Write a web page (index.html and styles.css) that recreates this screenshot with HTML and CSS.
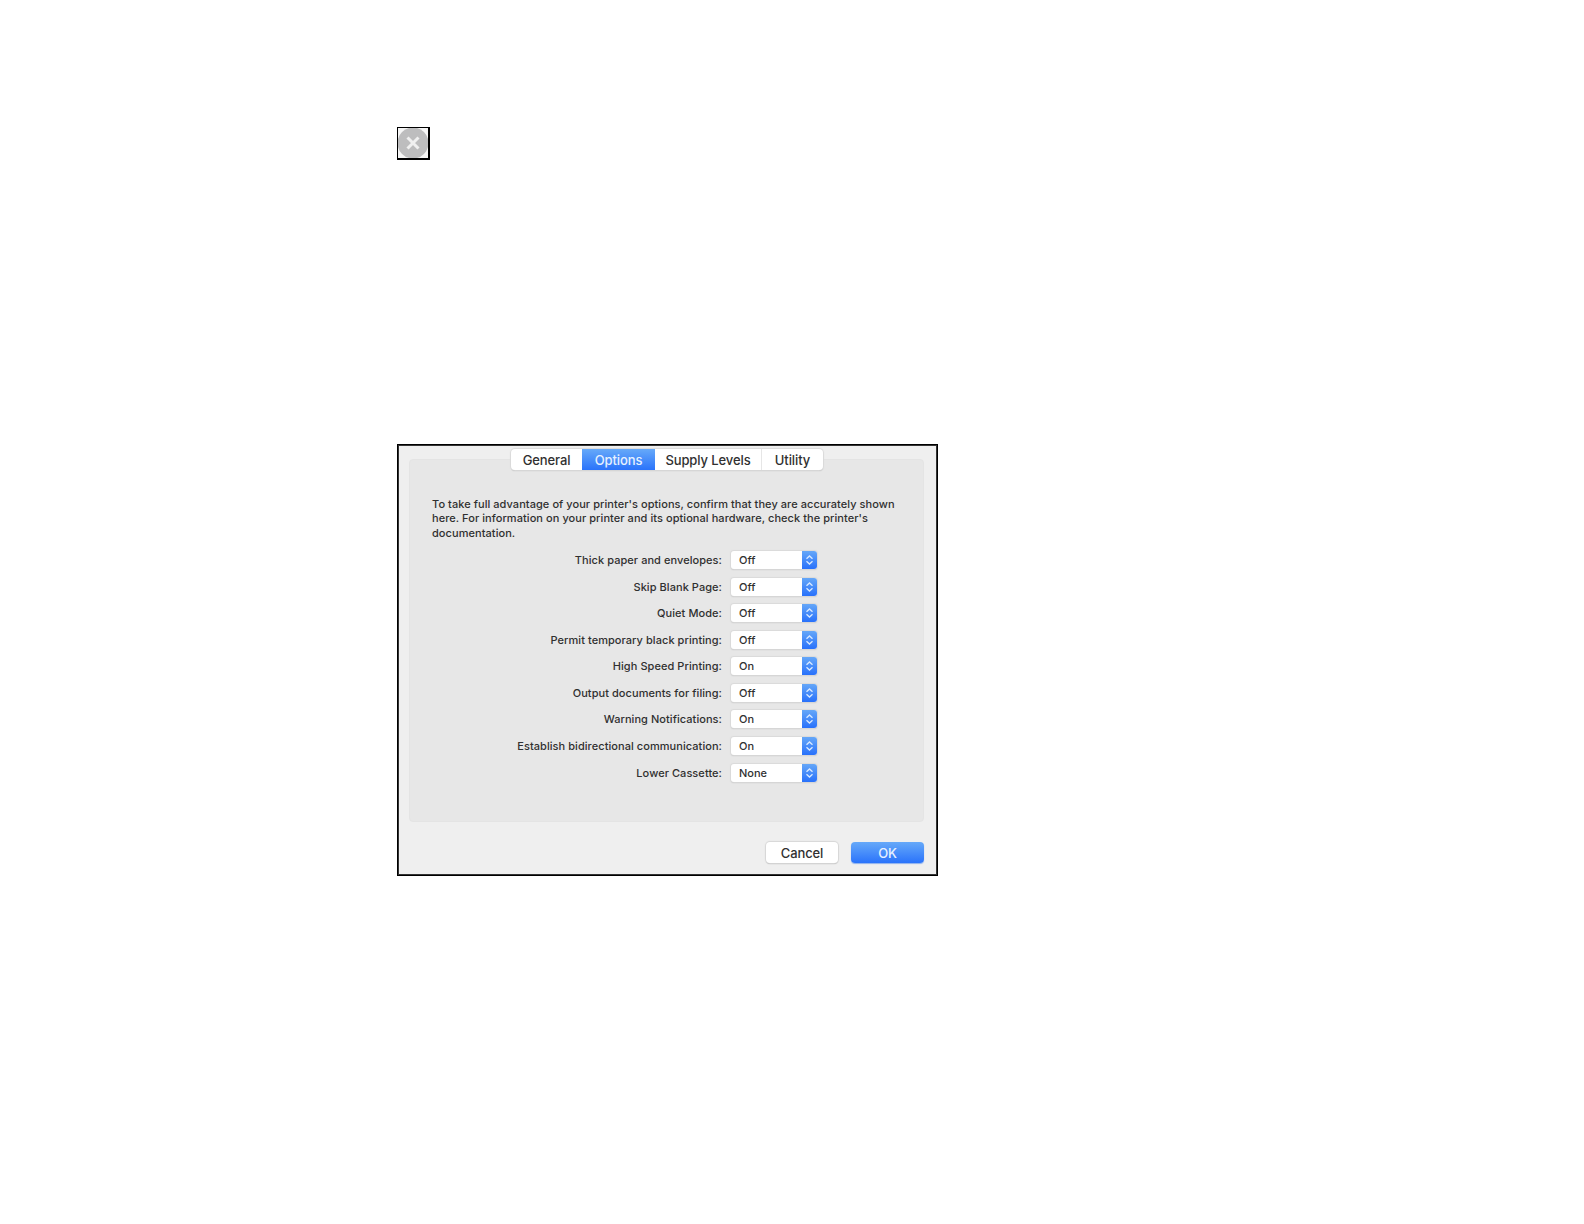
FILE: index.html
```html
<!DOCTYPE html>
<html lang="en">
<head>
    <meta charset="UTF-8">
    <meta name="viewport" content="width=device-width, initial-scale=1.0">
    <title>Printer Options</title>
    <link rel="stylesheet" href="styles.css">
</head>
<body>
    <button class="close-icon" aria-label="Close">
        <svg width="30" height="30" viewBox="0 0 30 30">
            <circle cx="15" cy="15" r="15.5" fill="#bdbdbe"/>
            <path d="M9.500 9.500l11 11M20.500 9.500l-11 11" stroke="#f0f0f0" stroke-width="3"/>
        </svg>
    </button>

    <div class="dialog">
        <div class="tabs">
            <button class="tab general">General</button>
            <button class="tab options active">Options</button>
            <button class="tab supply">Supply Levels</button>
            <button class="tab utility">Utility</button>
        </div>
        <div class="panel">
            <p class="intro">To take full advantage of your printer's options, confirm that they are accurately shown<br>here. For information on your printer and its optional hardware, check the printer's<br>documentation.</p>
            <div class="settings" id="settings"></div>
        </div>
        <div class="buttons">
            <button class="button cancel">Cancel</button>
            <button class="button ok">OK</button>
        </div>
    </div>

    <script src="script.js"></script>
</body>
</html>
```
FILE: styles.css
```css
body {
    margin: 0;
    padding: 127px 0 0 397px;
    background-color: #fff;
    font-family: Inter, "Liberation Sans", sans-serif;
    font-weight: 500;
    color: #303030;
}
button {
    padding: 0;
    border: none;
    font-family: inherit;
    font-weight: inherit;
    color: inherit;
}
.close-icon {
    display: block;
    box-sizing: border-box;
    width: 33px;
    height: 33px;
    border: solid #000;
    border-width: 1px 2px 2px 1px;
    background-color: #f6f6f6;
    overflow: hidden;
}
.close-icon svg {
    display: block;
}
.dialog {
    box-sizing: border-box;
    width: 541px;
    height: 432px;
    margin-top: 284px;
    padding: 4px 13px 0 11px;
    border: 1px solid #000;
    box-shadow: inset 0 0 0 1px #333;
    background-color: #efefef;
}
.tabs {
    position: relative;
    display: flex;
    width: 312px;
    height: 21px;
    margin-left: 102px;
    border-radius: 4px;
    background-color: #fff;
    box-shadow: 0 0 1px 1px #dadada, 0 1px 1px #b5b5b5;
}
.tab {
    height: 21px;
    background: none;
    font-size: 13px;
    line-height: 22px;
    letter-spacing: -0.1px;
}
.general {
    width: 71px;
}
.options {
    width: 73px;
}
.supply {
    width: 107px;
    border-right: 1px solid #e6e6e6;
}
.utility {
    width: 61px;
}
.tab.active {
    background: linear-gradient(#66a9f9, #2a73fb);
    color: #e6f1ff;
}
.panel {
    box-sizing: border-box;
    height: 363px;
    margin-top: -11px;
    padding: 37px 0 0 22px;
    border: 1px solid #e4e4e4;
    border-radius: 4px;
    background-color: #e7e7e7;
}
.intro {
    margin: 0;
    font-size: 11px;
    line-height: 14.3px;
    letter-spacing: 0.06px;
    white-space: nowrap;
}
.settings {
    margin-top: 7px;
}
.row {
    display: flex;
    align-items: center;
    height: 26.56px;
}
.label {
    width: 290px;
    margin-right: 9px;
    font-size: 11px;
    letter-spacing: 0.06px;
    text-align: right;
    white-space: nowrap;
}
.select {
    display: flex;
    justify-content: space-between;
    width: 86px;
    height: 18px;
    border-radius: 3px;
    background-color: #fff;
    box-shadow: 0 0 1px 1px #dadada, 0 1px 1px #b0b0b0;
    font-size: 11px;
    line-height: 18px;
    overflow: hidden;
}
.value {
    padding-left: 8px;
}
.arrows {
    width: 15px;
    height: 18px;
    background: linear-gradient(#65a7f8, #2871fb);
}
.buttons {
    display: flex;
    justify-content: flex-end;
    gap: 13px;
    margin-top: 20px;
}
.button {
    width: 72px;
    height: 21px;
    border-radius: 4px;
    background-color: #fff;
    box-shadow: 0 0 1px 1px #d6d6d6, 0 1px 1px #b0b0b0;
    font-size: 13px;
    line-height: 22px;
    letter-spacing: -0.1px;
}
.ok {
    width: 73px;
    background: linear-gradient(#66a9f9, #2a73fb);
    box-shadow: 0 1px 1px #8bb0ee;
    color: #e6f1ff;
}
```
FILE: script.js
```javascript
const settings = [
    { label: 'Thick paper and envelopes:', value: 'Off' },
    { label: 'Skip Blank Page:', value: 'Off' },
    { label: 'Quiet Mode:', value: 'Off' },
    { label: 'Permit temporary black printing:', value: 'Off' },
    { label: 'High Speed Printing:', value: 'On' },
    { label: 'Output documents for filing:', value: 'Off' },
    { label: 'Warning Notifications:', value: 'On' },
    { label: 'Establish bidirectional communication:', value: 'On' },
    { label: 'Lower Cassette:', value: 'None' }
];

document.getElementById('settings').innerHTML = settings.map(item => `
    <div class="row">
        <span class="label">${item.label}</span>
        <div class="select">
            <span class="value">${item.value}</span>
            <svg class="arrows" viewBox="0 0 15 18">
                <path d="M4.500 7.800L7.500 5L10.500 7.800M4.500 10.200L7.500 13L10.500 10.200" fill="none" stroke="#d5e7ff" stroke-width="1.4"/>
            </svg>
        </div>
    </div>`).join('');
```
